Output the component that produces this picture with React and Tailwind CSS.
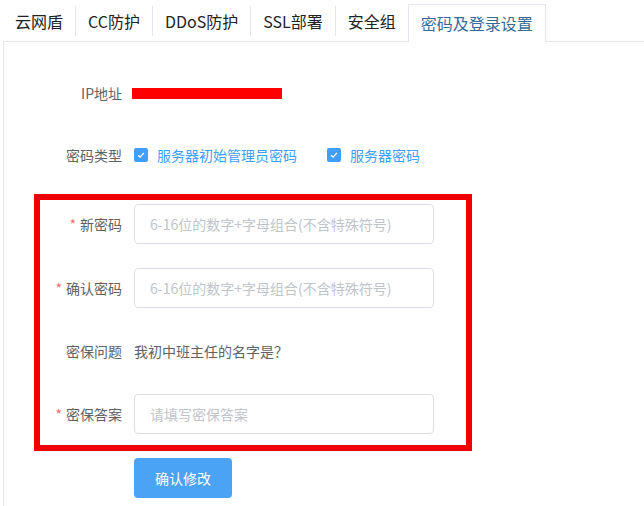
import React from "react";

const TABS = ["云网盾", "CC防护", "DDoS防护", "SSL部署", "安全组"];

function Check({ label }) {
  return (
    <label className="flex items-center gap-[9px] text-[14px] text-[#409eff]">
      <span className="flex h-[14px] w-[14px] items-center justify-center rounded-[2px] bg-[#409eff]">
        <svg viewBox="0 0 12 12" className="h-[10px] w-[10px]" fill="none" stroke="#fff" strokeWidth="1.6">
          <path d="M2.5 6.2 L5 8.5 L9.5 3.5" />
        </svg>
      </span>
      {label}
    </label>
  );
}

function Label({ required, children }) {
  return (
    <div className="w-[130px] shrink-0 pr-3 text-right text-[14px] text-[#606266]">
      {required && <span className="mr-1 text-[#f56c6c]">*</span>}
      {children}
    </div>
  );
}

function Input({ placeholder }) {
  return (
    <div className="flex h-[40px] w-[300px] items-center rounded-[4px] border border-[#dcdfe6] bg-white px-[15px] text-[14px] text-[#c0c4cc]">
      {placeholder}
    </div>
  );
}

export default function App() {
  const pwHint = "6-16位的数字+字母组合(不含特殊符号)";
  return (
    <div
      className="relative h-[506px] w-[644px] overflow-hidden bg-white"
      style={{ fontFamily: '"Noto Sans CJK SC", "Liberation Sans", sans-serif' }}
    >
      {/* tab bar */}
      <div className="flex h-[41px] items-end pl-[3px]">
        {TABS.map((t, i) => (
          <div key={t} className="flex h-[41px] items-center">
            <span className="px-3 text-[16px] leading-none text-[#222]">{t}</span>
            {i < TABS.length - 1 && <span className="h-[30px] w-px bg-[#e4e7ed]" />}
          </div>
        ))}
        <div className="relative z-10 -mb-px flex h-[38px] items-center border-x border-t border-[#e4e7ed] bg-white px-3 pb-[2px] text-[16px] leading-none text-[#356b98]">
          密码及登录设置
        </div>
      </div>

      {/* content */}
      <div className="ml-[3px] h-[470px] border-l border-t border-[#e4e7ed] pt-[31px]">
        <div className="flex h-[40px] items-center">
          <Label>IP地址</Label>
          <div className="-ml-[2px] h-[11px] w-[150px] bg-[#f00]" />
        </div>

        <div className="mt-[22px] flex h-[40px] items-center">
          <Label>密码类型</Label>
          <div className="flex items-center gap-[30px]">
            <Check label="服务器初始管理员密码" />
            <Check label="服务器密码" />
          </div>
        </div>

        <div className="mt-[29px] flex h-[40px] items-center">
          <Label required>新密码</Label>
          <Input placeholder={pwHint} />
        </div>

        <div className="mt-[24px] flex h-[40px] items-center">
          <Label required>确认密码</Label>
          <Input placeholder={pwHint} />
        </div>

        <div className="mt-[23px] flex h-[40px] items-center">
          <Label>密保问题</Label>
          <div className="text-[14px] text-[#606266]">我初中班主任的名字是？</div>
        </div>

        <div className="mt-[23px] flex h-[40px] items-center">
          <Label required>密保答案</Label>
          <Input placeholder="请填写密保答案" />
        </div>

        <div className="mt-[24px] flex">
          <div className="w-[130px] shrink-0" />
          <button className="h-[40px] w-[98px] rounded-[4px] bg-[#4ba3f5] text-[14px] text-white">
            确认修改
          </button>
        </div>
      </div>

      {/* annotation box */}
      <div className="pointer-events-none absolute left-[34px] top-[194px] h-[257px] w-[438px] border-[6px] border-[#ee0000]" />
    </div>
  );
}
